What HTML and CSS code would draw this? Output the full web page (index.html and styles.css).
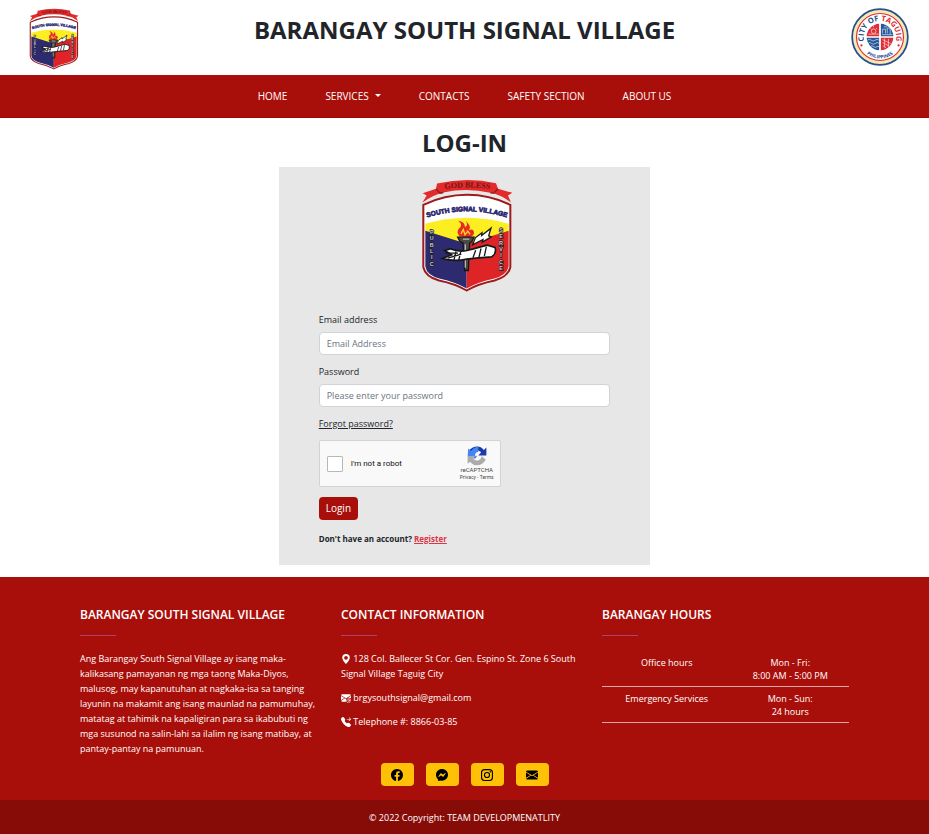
FILE: index.html
```html
<!DOCTYPE html>
<html lang="en">
<head>
<meta charset="utf-8">
<meta name="viewport" content="width=device-width, initial-scale=1">
<title>Barangay South Signal Village</title>
<link rel="stylesheet" href="styles.css">
</head>
<body>
<svg class="defs" width="0" height="0" aria-hidden="true">
  <symbol id="shield" viewBox="34 26 276 338">
    <path d="M41 103Q105 73 172 73Q240 73 302 103V290Q296 318 255 330Q205 340 171 360Q137 340 88 330Q47 318 41 290Z" fill="#fff" stroke="#9c1c1c" stroke-width="6"/>
    <path d="M47 160Q172 124 297 160V200L171 225L47 185Z" fill="#fdee21"/>
    <path d="M47 181L171 220V354Q137 335 91 325Q51 314 47 288Z" fill="#2e2a70"/>
    <path d="M297 181L171 220V354Q205 335 252 325Q292 314 297 288Z" fill="#df2427"/>
    <path d="M38 97L51 75L39 68L79 55L82 39Q172 18 259 38L265 55L308 67L295 75L304 96Q275 73 242 67Q172 51 101 66Q67 74 38 97Z" fill="#e32b2c"/>
    <path d="M79 55L91 68L101 66M265 55L252 68L242 67" fill="none" stroke="#941919" stroke-width="4"/>
    <path id="motto-arc" d="M84 59Q172 43 262 59" fill="none"/>
    <text class="motto"><textPath href="#motto-arc" startOffset="50%">GOD BLESS</textPath></text>
    <path id="village-arc" d="M46 143Q172 102 298 143" fill="none"/>
    <text class="village"><textPath href="#village-arc" startOffset="50%">SOUTH SIGNAL VILLAGE</textPath></text>
    <g class="side">
      <text x="66" y="190">P</text><text x="66" y="209">U</text><text x="66" y="228">B</text><text x="66" y="247">L</text><text x="66" y="266">I</text><text x="66" y="285">C</text>
      <text x="274" y="184">S</text><text x="274" y="203">E</text><text x="274" y="222">R</text><text x="274" y="241">V</text><text x="274" y="260">I</text><text x="274" y="279">C</text><text x="274" y="298">E</text>
    </g>
    <path d="M150 198Q137 182 151 171Q160 162 145 151Q166 154 166 170Q177 165 168 151Q187 168 178 179Q193 173 193 188Q190 200 174 200Z" fill="#e92b27"/>
    <path d="M154 190L161 177L166 193L174 182L181 191" stroke="#fdda20" stroke-width="4" fill="none"/>
    <path d="M144 200H193L187 213L180 217L176 300H165L160 217L151 213Z" fill="#4a4a48" stroke="#151515" stroke-width="4"/>
    <path d="M160 206H179M167 221V292" stroke="#b7b7b5" stroke-width="4"/>
    <path d="M105 240L121 235Q147 245 172 240Q212 230 233 224L256 231Q262 248 246 259Q204 261 171 266Q133 274 98 264L126 253Z" fill="#fff" stroke="#171717" stroke-width="5"/>
    <path d="M139 243L133 268M153 244L147 270M198 239L190 262M214 234L208 260M230 229L224 257M106 248H145M114 263L155 251" stroke="#171717" stroke-width="4"/>
    <path d="M189 223L197 202L217 187L216 195L244 173L237 196L245 199L218 215L220 207Z" fill="#fff" stroke="#1a1a1a" stroke-width="4"/>
  </symbol>
  <symbol id="i-geo" viewBox="0 0 16 16"><path d="M8 16s6-5.686 6-10A6 6 0 0 0 2 6c0 4.314 6 10 6 10zm0-7a3 3 0 1 1 0-6 3 3 0 0 1 0 6z"/></symbol>
  <symbol id="i-mail-at" viewBox="0 0 16 16"><path d="M2 2A2 2 0 0 0 .05 3.555L8 8.414l7.95-4.859A2 2 0 0 0 14 2H2zm-2 2.697v5.974A2 2 0 0 0 .192 11l5.383-3.089L0 4.697zM6.5 8.4.4 12.2A2 2 0 0 0 2 14h6.3A5 5 0 0 1 9 8.9l-1 .6-1.5-1.1zM16 4.697 11 7.7c2-.6 4-.2 5 .8V4.697z"/><path d="M12.5 9a3.5 3.5 0 1 0 2 6.3M12.5 9a3 3 0 0 1 3 3c0 2-1.8 2-1.8.4v-1.5M13.7 12a1.3 1.3 0 1 1-2.6 0 1.3 1.3 0 0 1 2.6 0" fill="none" stroke="currentColor" stroke-width=".9"/></symbol>
  <symbol id="i-phone" viewBox="0 0 16 16"><path d="M1.885.511a1.745 1.745 0 0 1 2.61.163L6.29 2.98c.329.423.445.974.315 1.494l-.547 2.19a.678.678 0 0 0 .178.643l2.457 2.457a.678.678 0 0 0 .644.178l2.189-.547a1.745 1.745 0 0 1 1.494.315l2.306 1.794c.829.645.905 1.87.163 2.611l-1.034 1.034c-.74.74-1.846 1.065-2.877.702a18.634 18.634 0 0 1-7.01-4.42A18.634 18.634 0 0 1 .15 4.421c-.362-1.03-.037-2.137.703-2.877L1.885.511zm10.761.135a.5.5 0 0 1 .708 0l2.5 2.5a.5.5 0 0 1 0 .708l-2.5 2.5a.5.5 0 0 1-.708-.708L14.293 4H9.5a.5.5 0 0 1 0-1h4.793l-1.647-1.646a.5.5 0 0 1 0-.708z"/></symbol>
  <symbol id="i-facebook" viewBox="0 0 16 16"><path d="M16 8.049c0-4.446-3.582-8.05-8-8.05C3.58 0-.002 3.603-.002 8.05c0 4.017 2.926 7.347 6.75 7.951v-5.625h-2.03V8.05H6.75V6.275c0-2.017 1.195-3.131 3.022-3.131.876 0 1.791.157 1.791.157v1.98h-1.009c-.993 0-1.303.621-1.303 1.258v1.51h2.218l-.354 2.326H9.25V16c3.824-.604 6.75-3.934 6.75-7.951z"/></symbol>
  <symbol id="i-messenger" viewBox="0 0 16 16"><path d="M0 7.76C0 3.301 3.493 0 8 0s8 3.301 8 7.76-3.493 7.76-8 7.76c-.81 0-1.586-.107-2.316-.307a.639.639 0 0 0-.427.03l-1.588.702a.64.64 0 0 1-.898-.566l-.044-1.423a.639.639 0 0 0-.215-.456C.956 12.108 0 10.092 0 7.76zm5.546-1.459-2.35 3.728c-.225.358.214.761.551.506l2.525-1.916a.48.48 0 0 1 .578-.002l1.869 1.402a1.2 1.2 0 0 0 1.735-.32l2.35-3.728c.226-.358-.214-.761-.551-.506L9.728 7.381a.48.48 0 0 1-.578.002L7.281 5.98a1.2 1.2 0 0 0-1.735.32z"/></symbol>
  <symbol id="i-instagram" viewBox="0 0 16 16"><g fill="none" stroke="currentColor" stroke-width="1.5"><rect x=".75" y=".75" width="14.5" height="14.5" rx="4"/><circle cx="8" cy="8" r="3.4"/></g><circle cx="12.3" cy="3.7" r="1"/></symbol>
  <symbol id="i-mail" viewBox="0 0 16 16"><path d="M.05 3.555A2 2 0 0 1 2 2h12a2 2 0 0 1 1.95 1.555L8 8.414.05 3.555zM0 4.697v7.104l5.803-3.558L0 4.697zM6.761 8.83l-6.57 4.027A2 2 0 0 0 2 14h12a2 2 0 0 0 1.808-1.144l-6.57-4.027L8 9.586l-1.239-.757zm3.436-.586L16 11.801V4.697l-5.803 3.546z"/></symbol>
</svg>

<header class="masthead">
  <svg class="masthead-shield" role="img" aria-label="South Signal Village"><use href="#shield"/></svg>
  <h1 class="title">BARANGAY SOUTH SIGNAL VILLAGE</h1>
  <svg class="masthead-seal" viewBox="0 0 200 200" role="img" aria-label="City of Taguig">
    <circle cx="100" cy="100" r="96" fill="#f7e9b4" stroke="#26508f" stroke-width="6"/>
    <circle cx="100" cy="100" r="81" fill="#fff" stroke="#dc3038" stroke-width="4"/>
    <path id="seal-top" d="M99 156A56 56 0 1 1 101 156" fill="none"/>
    <path id="seal-bottom" d="M26 100A74 74 0 0 0 174 100" fill="none"/>
    <text class="seal-city"><textPath href="#seal-top" startOffset="50%"><tspan fill="#244c8d">CITY OF </tspan><tspan fill="#dc3038">TAGUIG</tspan></textPath></text>
    <text class="seal-country"><textPath href="#seal-bottom" startOffset="50%">PHILIPPINES</textPath></text>
    <circle cx="36" cy="129" r="4" fill="#dc3038"/><circle cx="164" cy="129" r="4" fill="#dc3038"/>
    <path d="M97 97V54A46 46 0 0 0 54 97ZM103 103H146A46 46 0 0 1 103 146Z" fill="#df2e36"/>
    <path d="M103 97V54A46 46 0 0 1 146 97ZM97 103H54A46 46 0 0 0 97 146Z" fill="#245899"/>
    <g fill="none" stroke="#fff" stroke-width="2">
      <path d="M57 111q7-6 13 0t13 0t14 0M58 122q7-6 13 0t13 0t13 0M66 133q6-6 12 0t12 0h7"/>
      <circle cx="78" cy="80" r="8"/><path d="M78 66v-5M66 69l4 4M90 69l-4 4M60 90h36"/>
      <path d="M109 88V73h10v15M125 88V69h10v22M107 92h36M113 65h12"/>
      <path d="M109 109l28 14M109 119l22 12M110 130l11 8M116 105v30M129 106v28"/>
    </g>
  </svg>
</header>

<nav class="navbar" aria-label="Main">
  <a href="#">HOME</a>
  <a href="#" class="has-menu">SERVICES</a>
  <a href="#">CONTACTS</a>
  <a href="#">SAFETY SECTION</a>
  <a href="#">ABOUT US</a>
</nav>

<main class="login">
  <h2 class="title">LOG-IN</h2>
  <form class="card">
    <svg class="card-logo" role="img" aria-label="South Signal Village"><use href="#shield"/></svg>
    <div class="field">
      <label for="email">Email address</label>
      <input id="email" type="email" placeholder="Email Address">
    </div>
    <div class="field">
      <label for="password">Password</label>
      <input id="password" type="password" placeholder="Please enter your password">
    </div>
    <a class="forgot" href="#">Forgot password?</a>
    <div class="captcha">
      <input id="robot" type="checkbox">
      <label for="robot">I'm not a robot</label>
      <div class="captcha-brand">
        <svg viewBox="0 0 64 64" aria-hidden="true">
          <path d="M62 5v25H36l9-9C34 8 18 17 18 31L4 17C18-1 42-4 54 13Z" fill="#1c3aa9"/>
          <path d="M4 8L13 16C20 5 29 2 36 2v17c-8 0-11 7-10 13l7-1-7 10L2 33Z" fill="#4285f4"/>
          <path d="M2 33l20-2 4 2-6 7c10 12 26 6 27-8l13 12C47 66 22 67 10 50L2 57Z" fill="#ababab"/>
        </svg>
        <span class="captcha-name">reCAPTCHA</span>
        <span class="captcha-terms">Privacy - Terms</span>
      </div>
    </div>
    <button class="submit" type="submit">Login</button>
    <p class="register">Don't have an account? <a href="#">Register</a></p>
  </form>
</main>

<footer class="footer">
  <div class="footer-columns">
    <section>
      <h3>BARANGAY SOUTH SIGNAL VILLAGE</h3>
      <hr>
      <p>Ang Barangay South Signal Village ay isang maka-kalikasang pamayanan ng mga taong Maka-Diyos, malusog, may kapanutuhan at nagkaka-isa sa tanging layunin na makamit ang isang maunlad na pamumuhay, matatag at tahimik na kapaligiran para sa ikabubuti ng mga susunod na salin-lahi sa ilalim ng isang matibay, at pantay-pantay na pamunuan.</p>
    </section>
    <section>
      <h3>CONTACT INFORMATION</h3>
      <hr>
      <p><svg class="icon" aria-hidden="true"><use href="#i-geo"/></svg> 128 Col. Ballecer St Cor. Gen. Espino St. Zone 6 South Signal Village Taguig City</p>
      <p><svg class="icon" aria-hidden="true"><use href="#i-mail-at"/></svg> brgysouthsignal@gmail.com</p>
      <p><svg class="icon" aria-hidden="true"><use href="#i-phone"/></svg> Telephone #: 8866-03-85</p>
    </section>
    <section>
      <h3>BARANGAY HOURS</h3>
      <hr>
      <table class="hours">
        <tbody>
          <tr><td>Office hours</td><td>Mon - Fri:<br>8:00 AM - 5:00 PM</td></tr>
          <tr><td>Emergency Services</td><td>Mon - Sun:<br>24 hours</td></tr>
        </tbody>
      </table>
    </section>
  </div>
  <div class="social">
    <a href="#" aria-label="Facebook"><svg><use href="#i-facebook"/></svg></a>
    <a href="#" aria-label="Messenger"><svg><use href="#i-messenger"/></svg></a>
    <a href="#" aria-label="Instagram"><svg><use href="#i-instagram"/></svg></a>
    <a href="#" aria-label="Email"><svg><use href="#i-mail"/></svg></a>
  </div>
  <div class="copyright">© 2022 Copyright: <a href="#">TEAM DEVELOPMENATLITY</a></div>
</footer>
</body>
</html>
```
FILE: styles.css
```css
* { box-sizing: border-box; }

body {
  margin: 0;
  font: 9px/15px "Segoe UI", "Open Sans", "Noto Sans", sans-serif;
  color: #212529;
  background: #fff;
}

h1, h2, h3, p { margin: 0; }
.defs { position: absolute; }

.title {
  font-size: 24px;
  line-height: 32px;
  font-weight: 700;
  text-align: center;
}

/* Header */
.masthead {
  display: grid;
  grid-template-columns: 1fr auto 1fr;
  align-items: start;
  padding: 8px 20px 5px;
}
.masthead .title { padding-top: 6px; }
.masthead-shield { width: 50px; height: 62px; margin-left: 9px; }
.masthead-seal { width: 58px; height: 58px; justify-self: end; }

.motto { font: 900 24px "Liberation Serif", serif; text-anchor: middle; fill: #6f1414; }
.village { font: 700 20px "Liberation Sans", sans-serif; text-anchor: middle; fill: #2b2870; stroke: #2b2870; stroke-width: 2px; }
.side text { font: 700 16px "Liberation Sans", sans-serif; text-anchor: middle; fill: #d0d0d6; stroke: #1b1b1e; stroke-width: 4px; paint-order: stroke; }
.seal-city { font: 700 26px "Open Sans", sans-serif; text-anchor: middle; }
.seal-country { font: 700 16px "Open Sans", sans-serif; text-anchor: middle; fill: #244c8d; }

/* Navigation */
.navbar {
  display: flex;
  justify-content: center;
  flex-wrap: wrap;
  gap: 0 38px;
  padding: 14px 20px;
  font-size: 10px;
  background: #a90f0a;
  box-shadow: inset 0 -1px #970a08;
}
.navbar a { color: #fff; text-decoration: none; }
.has-menu::after {
  content: "";
  display: inline-block;
  margin-left: 6px;
  vertical-align: 3px;
  border: 3px solid transparent;
  border-top-color: #fff;
  border-bottom: 0;
}

/* Login */
.login { padding: 9px 0 12px; }
.card {
  display: flex;
  flex-direction: column;
  align-items: flex-start;
  width: 40%;
  min-width: 300px;
  margin: 8px auto 0;
  padding: 12px 40px 19px;
  background: #e7e7e7;
}
.card-logo { align-self: center; width: 92px; height: 113px; margin: 0 0 20px 4px; }
.field { display: flex; flex-direction: column; gap: 5px; width: 100%; margin-bottom: 9px; }
.field input {
  width: 100%;
  height: 23px;
  padding: 0 7px;
  border: 1px solid #ced4da;
  border-radius: 4px;
  font: inherit;
  background: #fff;
}
.field input::placeholder { color: #6c757d; opacity: 1; }
.forgot { color: #212529; }

.captcha {
  display: flex;
  align-items: center;
  gap: 8px;
  width: 182px;
  height: 47px;
  margin: 9px 0 10px;
  padding: 0 6px 0 7px;
  border: 1px solid #d3d3d3;
  border-radius: 2px;
  background: #f9f9f9;
  font-family: Roboto, sans-serif;
}
.captcha input {
  appearance: none;
  width: 16px;
  height: 16px;
  margin: 0;
  border: 1px solid #b8b8b8;
  border-radius: 1px;
  background: #fff;
}
.captcha label { font-size: 8px; color: #111; }
.captcha-brand { display: flex; flex-direction: column; align-items: center; margin-left: auto; color: #444; }
.captcha-brand svg { width: 20px; height: 20px; }
.captcha-name { font-size: 6px; line-height: 8px; }
.captcha-terms { font-size: 5px; line-height: 7px; }

.submit {
  height: 23px;
  padding: 0 7px;
  border: 0;
  border-radius: 4px;
  font: inherit;
  font-size: 10px;
  color: #fff;
  background: #a90f0a;
}
.register { margin-top: 11px; font-size: 8px; font-weight: 700; }
.register a { color: #dc3545; }

/* Footer */
.footer { color: #fff; background: #a90f0a; }
.footer a { color: inherit; text-decoration: none; }
.footer-columns {
  display: grid;
  grid-template-columns: repeat(3, 1fr);
  gap: 14px;
  padding: 30px 80px 0;
}
.footer h3 { font-size: 12px; line-height: 15px; font-weight: 600; }
.footer hr { width: 36px; height: 1px; margin: 13px 0 15px; border: 0; background: #b0406e; }
.footer p { margin-bottom: 9px; padding-right: 6px; }
.footer p:last-child { margin-bottom: 7px; }
.icon { width: 10px; height: 10px; vertical-align: -2px; fill: currentColor; color: #fff; }

.hours { width: 100%; margin-top: 2px; border-collapse: collapse; text-align: center; line-height: 13px; }
.hours td { padding: 5px 0 4px; vertical-align: top; border-bottom: 1px solid #dda5a3; }

.social { display: flex; justify-content: center; gap: 12px; }
.social a {
  display: grid;
  place-items: center;
  width: 33px;
  height: 23px;
  border-radius: 4px;
  background: #ffc107;
  color: #000;
}
.social svg { width: 12px; height: 12px; fill: currentColor; }
.copyright { margin-top: 14px; padding: 10px 10px 9px; text-align: center; background: #870c08; }
```
